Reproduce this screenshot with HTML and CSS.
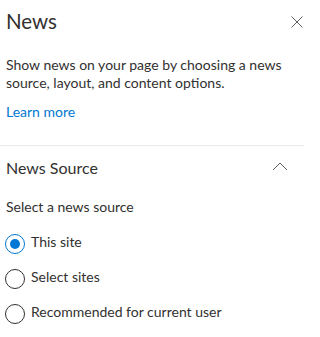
FILE: index.html
```html
<!DOCTYPE html>
<html lang="en">
<head>
<meta charset="utf-8">
<title>News</title>
<link rel="stylesheet" href="styles.css">
</head>
<body>
<div class="panel">
  <div class="panel-header">
    <h1 class="panel-title">News</h1>
    <button class="close-btn" aria-label="Close">
      <svg width="12" height="12" viewBox="0 0 12 12"><path d="M0.5 0.5 L11.5 11.5 M11.5 0.5 L0.5 11.5" stroke="#605e5c" stroke-width="1" fill="none"/></svg>
    </button>
  </div>
  <div class="intro">
    <p class="desc">Show news on your page by choosing a news source, layout, and content options.</p>
    <a class="learn" href="#">Learn more</a>
  </div>
  <div class="divider"></div>
  <div class="section">
    <div class="section-header">
      <span class="section-title">News Source</span>
      <svg class="chevron" width="16" height="9" viewBox="0 0 16 9"><path d="M1 8 L8 1 L15 8" stroke="#605e5c" stroke-width="1" fill="none"/></svg>
    </div>
    <div class="field-label">Select a news source</div>
    <div class="radios">
      <label class="radio checked"><span class="circle"></span><span class="radio-text">This site</span></label>
      <label class="radio"><span class="circle"></span><span class="radio-text">Select sites</span></label>
      <label class="radio"><span class="circle"></span><span class="radio-text">Recommended for current user</span></label>
    </div>
  </div>
</div>
</body>
</html>
```
FILE: styles.css
```css
html, body {
  margin: 0;
  padding: 0;
  background: #ffffff;
}
body {
  font-family: "Lato", "Noto Sans", sans-serif;
  color: #323130;
  font-size: 14px;
}
.panel {
  width: 304px;
}
.panel-header {
  display: flex;
  justify-content: space-between;
  align-items: flex-start;
  padding: 7px 1px 0 6px;
}
.panel-title {
  margin: 0;
  font-size: 20.5px;
  font-weight: 400;
  line-height: 28px;
  color: #323130;
}
.close-btn {
  border: 0;
  background: none;
  padding: 0;
  margin-top: 9px;
  width: 12px;
  height: 12px;
  display: block;
}
.close-btn svg {
  display: block;
}
.intro {
  padding: 21px 6px 0 6px;
}
.desc {
  margin: 0;
  line-height: 18px;
}
.learn {
  display: block;
  margin-top: 11px;
  line-height: 18px;
  color: #0078d4;
  text-decoration: none;
}
.divider {
  height: 1px;
  background: #edebe9;
  margin-top: 24px;
}
.section {
  padding: 11px 0 0 6px;
}
.section-header {
  display: flex;
  justify-content: space-between;
  align-items: flex-start;
  padding-right: 16px;
}
.section-title {
  font-size: 16px;
  line-height: 22px;
}
.chevron {
  display: block;
  margin-top: 5px;
}
.field-label {
  margin-top: 19px;
  line-height: 18px;
}
.radios {
  margin-top: 18px;
  margin-left: -1px;
  display: flex;
  flex-direction: column;
  gap: 15px;
}
.radio {
  display: flex;
  align-items: flex-start;
  height: 20px;
}
.circle {
  box-sizing: border-box;
  width: 20px;
  height: 20px;
  border: 1px solid #323130;
  border-radius: 50%;
  flex: none;
  position: relative;
}
.radio.checked .circle {
  border-color: #0078d4;
}
.radio.checked .circle::after {
  content: "";
  position: absolute;
  left: 4px;
  top: 4px;
  width: 10px;
  height: 10px;
  border-radius: 50%;
  background: #0078d4;
}
.radio-text {
  margin-left: 6px;
  margin-top: -1px;
  line-height: 18px;
}
```
